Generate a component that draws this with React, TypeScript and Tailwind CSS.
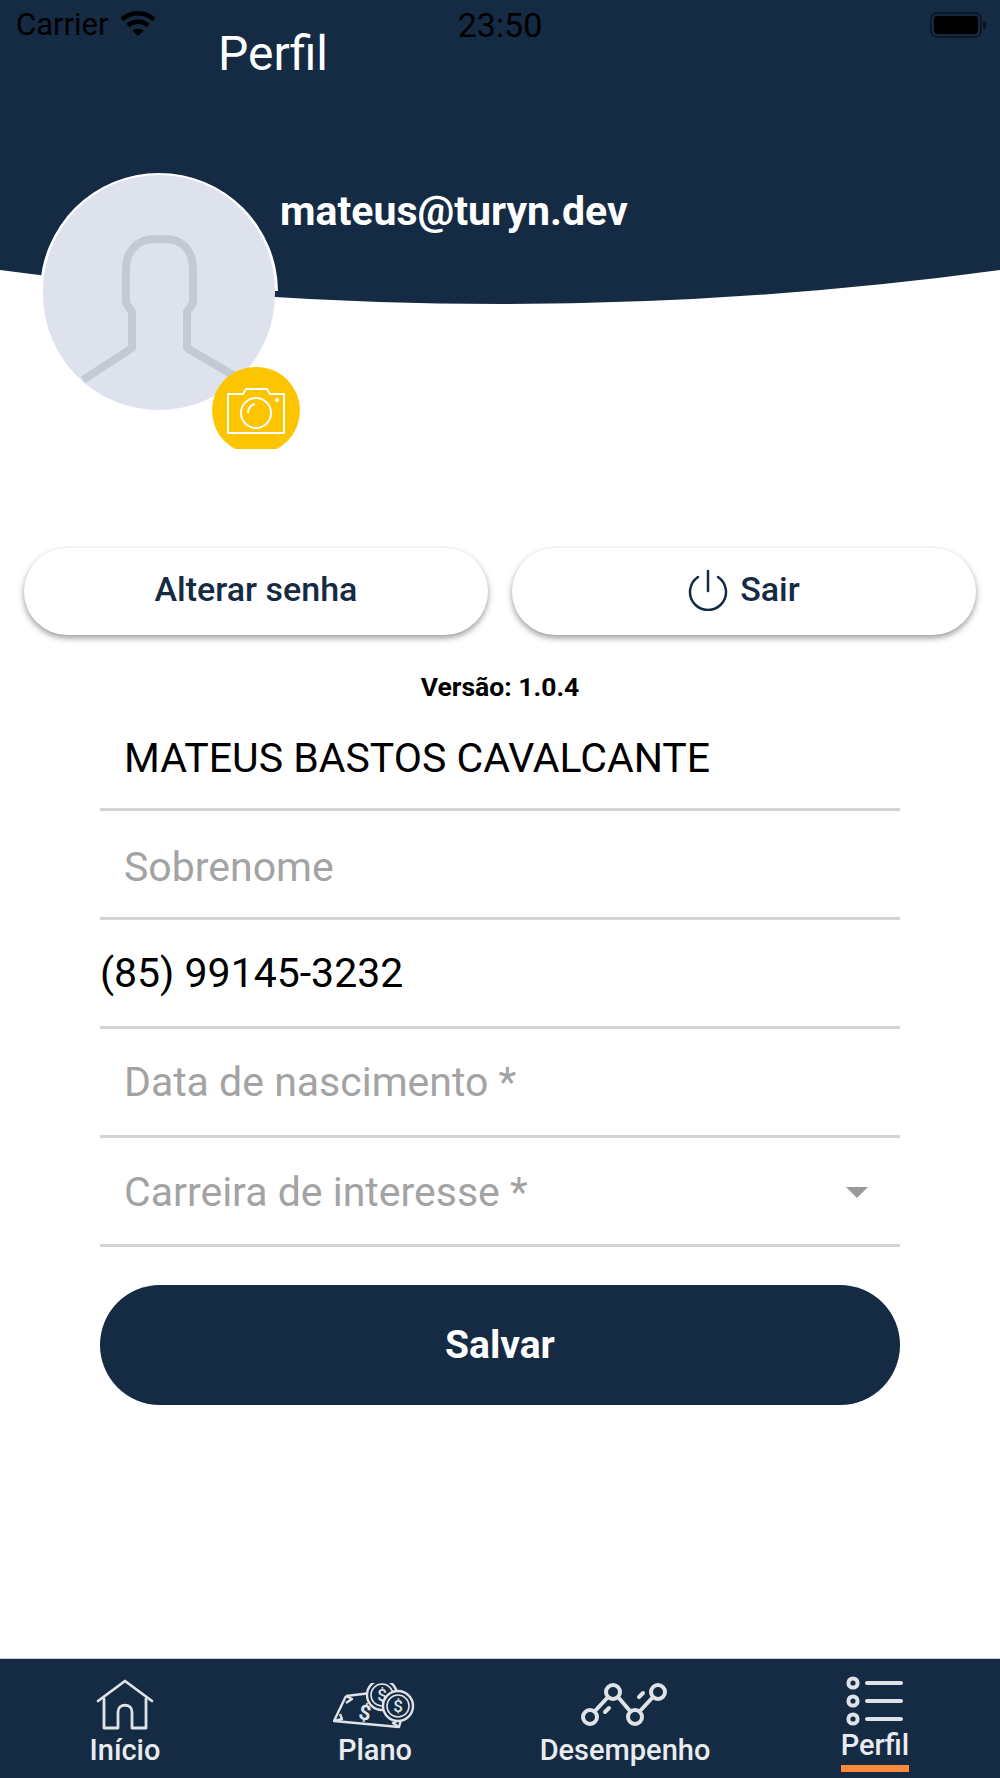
import { ReactNode } from "react";

const NAVY = "#152a43";

function Wifi() {
  return (
    <svg width="36" height="28" viewBox="0 0 36 28" fill="none" stroke="#000" strokeWidth="4.5">
      <path d="M2 9.5C11 1 25 1 34 9.5" />
      <path d="M8 15.5C13.5 10.5 22.5 10.5 28 15.5" />
      <path d="M18 26L12.5 20.5C15.5 18 20.5 18 23.5 20.5Z" fill="#000" stroke="none" />
    </svg>
  );
}

function Battery() {
  return (
    <svg width="56" height="26" viewBox="0 0 56 26" fill="none">
      <rect x="1" y="1" width="50" height="24" rx="6" stroke="#0b1420" strokeWidth="1.5" />
      <rect x="4" y="4" width="44" height="18" rx="3" fill="#000" />
      <rect x="53" y="9" width="3" height="8" rx="1.5" fill="#0b1420" />
    </svg>
  );
}

function AvatarSilhouette() {
  return (
    <svg className="absolute inset-0" width="232" height="235" viewBox="0 0 232 235" fill="none" stroke="#c3cad6" strokeWidth="8" strokeLinejoin="round">
      <path d="M40 205L89 173V137L83 128V95C83 75 95 64 112 64H122C139 64 150 75 150 95V128L144 137V173L195 203" />
    </svg>
  );
}

function Camera() {
  return (
    <svg width="60" height="46" viewBox="0 0 60 46" fill="none" stroke="#fff" strokeWidth="2">
      <path d="M2 6H17L20 1H41L44 6H58V45H2Z" strokeLinejoin="round" />
      <circle cx="30" cy="25" r="15" />
      <path d="M22 25C22 20 25 17 29 16" />
      <circle cx="51" cy="12" r="2" fill="#fff" stroke="none" />
    </svg>
  );
}

function Power() {
  return (
    <svg width="40" height="42" viewBox="0 0 40 42" fill="none" stroke={NAVY} strokeWidth="2.5" strokeLinecap="round">
      <path d="M20 2V22" />
      <path d="M10 8A18 18 0 1 0 30 8" />
    </svg>
  );
}

function HomeIcon() {
  return (
    <svg width="58" height="52" viewBox="0 0 58 52" fill="none" stroke="#dfe3e8" strokeWidth="2.8" strokeLinejoin="round" strokeLinecap="round">
      <path d="M2 22L29 2L56 22" />
      <path d="M8 20V49H22V33C22 24 36 24 36 33V49H50V20" />
    </svg>
  );
}

function MoneyIcon() {
  return (
    <svg width="84" height="48" viewBox="0 0 84 48" fill="none" stroke="#dfe3e8" strokeWidth="2.4" strokeLinejoin="round">
      <path d="M13 13L38 10M13 13L1 38L66 44L70 30" />
      <path d="M13 13L19 16L13 20M1 38L9 36L7 31M66 44L60 40L68 36" />
      <circle cx="49" cy="12" r="15" fill={NAVY} />
      <circle cx="49" cy="12" r="11" strokeWidth="1.6" />
      <circle cx="65" cy="23" r="15" fill={NAVY} />
      <circle cx="65" cy="23" r="11" strokeWidth="1.6" />
      <text x="49" y="18" textAnchor="middle" fontSize="17" fontWeight="500" fill="#dfe3e8" stroke="none" fontFamily="Roboto, sans-serif">$</text>
      <text x="65" y="29" textAnchor="middle" fontSize="17" fontWeight="500" fill="#dfe3e8" stroke="none" fontFamily="Roboto, sans-serif">$</text>
      <text x="32" y="37" textAnchor="middle" fontSize="21" fontWeight="700" fill="#dfe3e8" stroke="none" fontFamily="Roboto, sans-serif" transform="rotate(10 32 30)">$</text>
    </svg>
  );
}

function ChartIcon() {
  return (
    <svg width="88" height="44" viewBox="0 0 88 44" fill="none" stroke="#dfe3e8" strokeWidth="4" strokeLinecap="round">
      <circle cx="9" cy="34" r="7" />
      <circle cx="32" cy="9" r="7" />
      <circle cx="54" cy="34" r="7" />
      <circle cx="77" cy="9" r="7" />
      <path d="M14 28L27 14M37 14L49 28M59 28L72 14" />
      <path d="M24 29L28 25M58 14L62 10" />
    </svg>
  );
}

function ListIcon() {
  return (
    <svg width="58" height="50" viewBox="0 0 58 50" fill="none" stroke="#dfe3e8" strokeWidth="4" strokeLinecap="round">
      <circle cx="7" cy="7" r="4.6" />
      <circle cx="7" cy="25" r="4.6" />
      <circle cx="7" cy="43" r="4.6" />
      <path d="M21 7H55M21 25H55M21 43H55" />
    </svg>
  );
}

function Field({ children, className = "" }: { children: ReactNode; className?: string }) {
  return (
    <div className={`flex h-[109px] items-center justify-between border-b-[3px] border-[#d4d4d4] text-[41px] ${className}`}>
      {children}
    </div>
  );
}

function Tab({ icon, label, active, lift }: { icon: ReactNode; label: string; active?: boolean; lift?: boolean }) {
  return (
    <div className="flex flex-col items-center">
      <div className={`flex items-end justify-center ${active ? "h-[67px]" : lift ? "h-[68px]" : "h-[72px]"}`}>{icon}</div>
      <div className={`font-medium text-[29px] leading-[34px] text-[#e9ecef] ${active ? "mt-[2px] border-b-[7px] border-[#fb8a3c] pb-[3px]" : lift ? "mt-[6px]" : "mt-[2px]"}`}>{label}</div>
    </div>
  );
}

export default function App() {
  return (
    <div className="relative flex h-[1778px] w-[1000px] flex-col overflow-hidden bg-white font-['Roboto',sans-serif]">
      <header className="relative h-[304px]">
        <svg className="absolute inset-0" width="1000" height="304" viewBox="0 0 1000 304">
          <path d="M0 0H1000V270Q500 338 0 270Z" fill={NAVY} />
        </svg>
        <div className="relative flex h-[50px] items-center px-[16px] text-[31px] text-black">
          <span>Carrier</span>
          <span className="ml-[11px] -mt-[2px]"><Wifi /></span>
          <span className="absolute left-0 right-0 text-center text-[34px]">23:50</span>
          <span className="ml-auto -mr-[2px]"><Battery /></span>
        </div>
        <h1 className="relative -mt-[22px] pl-[218px] text-[48px] leading-[52px] font-normal text-white">Perfil</h1>
        <p className="relative mt-[108px] pl-[280px] text-[41px] leading-[46px] font-bold text-white">mateus@turyn.dev</p>
      </header>

      {/* avatar sits over the header curve */}
      <div className="absolute left-[40px] top-[173px] h-[238px] w-[238px] rounded-full bg-white [clip-path:inset(0_0_120px_0)]" />
      <div className="absolute left-[43px] top-[175px] h-[235px] w-[232px] overflow-hidden rounded-full bg-[#dde2ed]">
        <AvatarSilhouette />
      </div>
      <div className="absolute left-[212px] top-[367px] h-[82px] w-[88px] overflow-hidden">
        <div className="flex h-[87px] w-[88px] items-center justify-center rounded-full bg-[#fdc500]">
          <Camera />
        </div>
      </div>

      <main className="flex flex-1 flex-col pt-[244px]">
        <div className="flex gap-[24px] px-[24px]">
          <button className="h-[87px] flex-1 rounded-[44px] bg-white pb-[4px] text-[34px] font-medium text-[#152a43] shadow-[0_3px_6px_rgba(0,0,0,0.4)]">
            Alterar senha
          </button>
          <button className="flex h-[87px] flex-1 items-center justify-center gap-[12px] rounded-[44px] bg-white pb-[4px] text-[34px] font-medium text-[#152a43] shadow-[0_3px_6px_rgba(0,0,0,0.4)]">
            <Power />
            Sair
          </button>
        </div>
        <p className="mt-[38px] text-center text-[26.5px] leading-[28px] font-bold text-black">Versão: 1.0.4</p>
        <div className="mt-[1px] px-[100px]">
          <Field className="pl-[24px] pt-[8px] text-black">MATEUS BASTOS CAVALCANTE</Field>
          <Field className="pl-[24px] pt-[8px] text-[#a3a3a3]">Sobrenome</Field>
          <Field className="pt-[1px] text-black">(85) 99145-3232</Field>
          <Field className="pl-[24px] pt-[1px] text-[#a3a3a3]">Data de nascimento *</Field>
          <Field className="pl-[24px] pr-[32px] pt-[3px] text-[#a3a3a3]">
            Carreira de interesse *
            <span className="h-0 w-0 border-x-[11px] border-t-[11px] border-x-transparent border-t-[#999]" />
          </Field>
          <button className="mt-[38px] h-[120px] w-full rounded-[60px] bg-[#152a43] text-[39px] font-bold text-white">Salvar</button>
        </div>
      </main>

      <nav className="grid h-[120px] grid-cols-4 border-t border-[#c5d0dc] bg-[#152a43]">
        <Tab icon={<HomeIcon />} label="Início" />
        <Tab icon={<MoneyIcon />} label="Plano" />
        <Tab icon={<ChartIcon />} label="Desempenho" lift />
        <Tab icon={<ListIcon />} label="Perfil" active />
      </nav>
    </div>
  );
}
